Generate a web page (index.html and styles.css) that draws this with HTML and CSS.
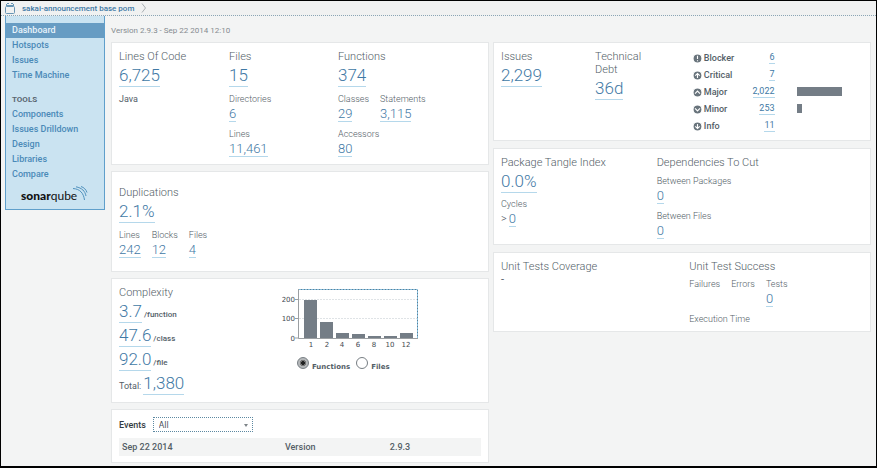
FILE: index.html
```html
<!DOCTYPE html>
<html lang="en">
<head>
<meta charset="utf-8">
<title>sakai-announcement base pom</title>
<link rel="stylesheet" href="styles.css">
</head>
<body>
<header class="crumbs">
  <svg class="crumb-icon" width="10" height="11" viewBox="0 0 10 11" fill="none" stroke="#6795b4"><rect x=".5" y="3.5" width="9" height="7" rx="1"/><path d="M1 2.500h8M2 .5h2M6 .5h2M1.500 1v2M8.500 1v2"/></svg>
  <a href="#">sakai-announcement base pom</a>
  <svg width="6" height="10" viewBox="0 0 6 10" fill="none" stroke="#aaafb3"><path d="M1 .5 4.500 5 1 9.500"/></svg>
</header>
<div class="layout">
  <nav class="sidebar">
    <a class="active" href="#">Dashboard</a>
    <a href="#">Hotspots</a>
    <a href="#">Issues</a>
    <a href="#">Time Machine</a>
    <h2>TOOLS</h2>
    <a href="#">Components</a>
    <a href="#">Issues Drilldown</a>
    <a href="#">Design</a>
    <a href="#">Libraries</a>
    <a href="#">Compare</a>
    <div class="logo"><b>sonar</b>qube<svg width="15" height="15" viewBox="0 0 15 15" fill="none" stroke="#4f91bd"><path d="M0 2.500C7 3 10.500 7 11.500 14M3 .8C9 2 12 5 13 10M8 .5c3 1 5 3 6 6"/></svg></div>
  </nav>
  <main>
    <p class="version">Version 2.9.3 - Sep 22 2014 12:10</p>
    <div class="columns">
      <div class="column left">
        <section class="card size">
          <div>
            <h3>Lines Of Code</h3>
            <a class="big" href="#">6,725</a>
            <p class="language">Java</p>
          </div>
          <div>
            <h3>Files</h3>
            <a class="big" href="#">15</a>
            <div class="metric"><span>Directories</span><a href="#">6</a></div>
            <div class="metric"><span>Lines</span><a href="#">11,461</a></div>
          </div>
          <div>
            <h3>Functions</h3>
            <a class="big" href="#">374</a>
            <div class="metrics">
              <div class="metric"><span>Classes</span><a href="#">29</a></div>
              <div class="metric"><span>Statements</span><a href="#">3,115</a></div>
            </div>
            <div class="metric"><span>Accessors</span><a href="#">80</a></div>
          </div>
        </section>
        <section class="card duplications">
          <h3>Duplications</h3>
          <a class="big" href="#">2.1%</a>
          <div class="metrics">
            <div class="metric"><span>Lines</span><a href="#">242</a></div>
            <div class="metric"><span>Blocks</span><a href="#">12</a></div>
            <div class="metric"><span>Files</span><a href="#">4</a></div>
          </div>
        </section>
        <section class="card complexity">
          <div>
            <h3>Complexity</h3>
            <p class="ratio"><a class="big" href="#">3.7</a> /function</p>
            <p class="ratio"><a class="big" href="#">47.6</a> /class</p>
            <p class="ratio"><a class="big" href="#">92.0</a> /file</p>
            <p class="ratio total">Total: <a class="big" href="#">1,380</a></p>
          </div>
          <div class="distribution">
            <svg class="chart" width="140" height="62" viewBox="0 0 140 62">
              <path d="M17 10.500H135M17 29.500H135" stroke="#dfe3e6" stroke-dasharray="2 1"/>
              <path d="M16 .5H135.500V49" fill="none" stroke="#83bbdb"/>
              <path d="M16 .5H135.500V49" fill="none" stroke="#5d7f93" stroke-dasharray="1 2"/>
              <path d="M16.500 0V49.500H136M13 10.500h4M13 29.500h4M13 49h4" fill="none" stroke="#9b9fa2"/>
              <path d="M22 11h13v38H22zM38 33h13v16H38zM54 44h13v5H54zM70 45h13v4H70zM86 47h13v2H86zM102 47h13v2H102zM118 44h13v5H118z" fill="#747d86"/>
              <g text-anchor="end"><text x="13" y="13">200</text><text x="13" y="32">100</text><text x="13" y="52">0</text></g>
              <g text-anchor="middle"><text x="29" y="58">1</text><text x="45" y="58">2</text><text x="60" y="58">4</text><text x="76" y="58">6</text><text x="92" y="58">8</text><text x="108" y="58">10</text><text x="124" y="58">12</text></g>
            </svg>
            <div class="choices">
              <label><input type="radio" name="scope" checked><span>Functions</span></label>
              <label><input type="radio" name="scope"><span>Files</span></label>
            </div>
          </div>
        </section>
        <section class="card events">
          <div class="filter">
            <label for="category">Events</label>
            <div class="picker"><select id="category"><option>All</option></select></div>
          </div>
          <table>
            <tr><td>Sep 22 2014</td><td>Version</td><td>2.9.3</td></tr>
          </table>
        </section>
      </div>
      <div class="column right">
        <section class="card issues">
          <div>
            <h3>Issues</h3>
            <a class="big" href="#">2,299</a>
          </div>
          <div>
            <h3>Technical<br>Debt</h3>
            <a class="big" href="#">36d</a>
          </div>
          <table class="severities">
            <tr><th><svg viewBox="0 0 8 8"><circle cx="4" cy="4" r="4"/><path d="M4 1.500v3M4 5.500v1"/></svg>Blocker</th><td><a href="#">6</a></td><td></td></tr>
            <tr><th><svg viewBox="0 0 8 8"><circle cx="4" cy="4" r="4"/><path d="M4 6.200V2.500M2 4.200l2-2 2 2"/></svg>Critical</th><td><a href="#">7</a></td><td></td></tr>
            <tr><th><svg viewBox="0 0 8 8"><circle cx="4" cy="4" r="4"/><path d="M1.800 5 4 2.800 6.200 5"/></svg>Major</th><td><a href="#">2,022</a></td><td><div class="bar" style="width:68%"></div></td></tr>
            <tr><th><svg viewBox="0 0 8 8"><circle cx="4" cy="4" r="4"/><path d="M1.800 3 4 5.200 6.200 3"/></svg>Minor</th><td><a href="#">253</a></td><td><div class="bar" style="width:8%"></div></td></tr>
            <tr><th><svg viewBox="0 0 8 8"><circle cx="4" cy="4" r="4"/><path d="M4 1.800v3.700M2 3.800l2 2 2-2"/></svg>Info</th><td><a href="#">11</a></td><td></td></tr>
          </table>
        </section>
        <section class="card packages">
          <div>
            <h3>Package Tangle Index</h3>
            <a class="big" href="#">0.0%</a>
            <div class="metric"><span>Cycles</span><div class="prefixed">&gt; <a href="#">0</a></div></div>
          </div>
          <div>
            <h3>Dependencies To Cut</h3>
            <div class="metric"><span>Between Packages</span><a href="#">0</a></div>
            <div class="metric"><span>Between Files</span><a href="#">0</a></div>
          </div>
        </section>
        <section class="card tests">
          <div>
            <h3>Unit Tests Coverage</h3>
            <p class="none">-</p>
          </div>
          <div>
            <h3>Unit Test Success</h3>
            <div class="metrics">
              <div class="metric"><span>Failures</span></div>
              <div class="metric"><span>Errors</span></div>
              <div class="metric"><span>Tests</span><a href="#">0</a></div>
            </div>
            <div class="metric"><span>Execution Time</span></div>
          </div>
        </section>
      </div>
    </div>
  </main>
</div>
</body>
</html>
```
FILE: styles.css
```css
* { box-sizing: border-box; }
body {
  margin: 0;
  min-height: 100vh;
  border: 1px solid #000;
  border-bottom-width: 2px;
  background: #f3f4f4;
  color: #535e67;
  font-family: Roboto, "Liberation Sans", sans-serif;
  font-size: 9px;
}
h2, h3, p { margin: 0; }
a { color: #3f79a5; text-decoration: none; }

.crumbs {
  display: flex;
  align-items: center;
  gap: 7px;
  height: 15px;
  padding-left: 4px;
  border-bottom: 1px dotted #8aa5b5;
  background: #f0f1f1;
  font-size: 8px;
  font-weight: 500;
}

.layout { display: flex; align-items: flex-start; }
.sidebar {
  width: 100px;
  flex: none;
  margin-left: 4px;
  padding: 7px 0 4px;
  border: 1px solid #5f9fcb;
  border-top: 0;
  background: #cae3f1;
  font-weight: 500;
}
.sidebar a, .sidebar h2 {
  display: block;
  padding-left: 6px;
  line-height: 15px;
}
.sidebar a { color: #4a8ab8; }
.sidebar h2 { margin-top: 9px; font-size: 8px; color: #5a6771; }
.sidebar .active { background: #679cc3; color: #e8f4fb; }
.logo {
  display: flex;
  align-items: center;
  height: 19px;
  margin-top: 4px;
  padding-left: 15px;
  color: #111;
  font: 12px/19px Lato, sans-serif;
}
.logo b { font-weight: 900; }
.logo svg { align-self: flex-start; margin-left: -4px; }

main { flex: 1; min-width: 0; padding: 0 5px 0 6px; }
.version { padding: 8px 0 4px; color: #858b90; font-size: 8px; line-height: 14px; }
.columns { display: grid; grid-template-columns: 1fr 1fr; gap: 4px; }
.column { display: flex; flex-direction: column; }
.left { gap: 6px; }
.right { gap: 7px; }
.card {
  padding: 5px 7px 7px;
  border: 1px solid #e5e7e8;
  background: #fff;
}
.size, .issues, .packages, .tests { display: grid; }
.size { grid-template-columns: 110px 109px 1fr; }
.issues { grid-template-columns: 26% 27% 1fr; padding-bottom: 6px; }
.packages { grid-template-columns: 43% 1fr; padding-bottom: 5px; }
.tests { grid-template-columns: 52% 1fr; padding-bottom: 5px; }

h3 { padding: 2px 0 1px; font-size: 11px; font-weight: 300; line-height: 13px; }
.big, .metric a {
  display: block;
  width: fit-content;
  border-bottom: 1px solid #b5d8eb;
  font-weight: 300;
}
.big { font-size: 17px; line-height: 22px; }
.metric { margin-top: 5px; font-weight: 300; }
.metric span { display: block; line-height: 14px; }
.metric a { font-size: 13px; line-height: 15px; }
.packages .metric { margin-top: 4px; }
.packages .metric + .metric { margin-top: 5px; }
.metrics { display: flex; gap: 11px; }
.prefixed { display: flex; gap: 2px; font-size: 11px; line-height: 15px; }
.language { margin-top: 5px; line-height: 14px; }
.duplications { padding: 12px 7px 13px; }

.complexity { display: grid; grid-template-columns: 45% 1fr; padding: 5px 7px 6px; }
.ratio { display: flex; align-items: baseline; gap: 2px; height: 24px; font-size: 8px; font-weight: 500; }
.total { font-size: 9px; font-weight: 400; }
.distribution { padding-top: 5px; }
.chart { display: block; }
.chart text { fill: #3f4951; font: 7px "DejaVu Sans", sans-serif; }
.choices { display: flex; gap: 6px; padding: 3px 0 0 15px; }
.choices label { display: flex; align-items: center; gap: 3px; }
.choices span { padding-top: 9px; font: 7px/9px "DejaVu Sans", sans-serif; font-weight: 700; }
.choices input {
  appearance: none;
  width: 12px;
  height: 12px;
  margin: 0;
  border: 1px solid #777e83;
  border-radius: 50%;
  background: #fff;
}
.choices input:checked { background: radial-gradient(circle, #222 0 2px, #777 2px 3px, #b5b8ba 3px); }

.events { padding: 7px 7px 6px; }
.filter { display: flex; align-items: center; gap: 7px; color: #333b42; font-weight: 500; }
.picker { position: relative; width: 100px; }
.picker::after {
  content: "";
  position: absolute;
  right: 5px;
  top: 7px;
  border: 2px solid transparent;
  border-top: 3px solid #7d8488;
}
select {
  appearance: none;
  display: block;
  width: 100%;
  height: 15px;
  padding: 2px 5px 0;
  border: 1px dotted #5d89a2;
  border-radius: 0;
  background: #fff;
  color: #444c52;
  font: 8px/11px "DejaVu Sans", sans-serif;
}
table { width: 100%; border-collapse: collapse; }
td, th { padding: 0; text-align: left; font-weight: 400; }
.events table { margin-top: 6px; background: #f3f4f4; table-layout: fixed; }
.events td { height: 18px; padding-left: 3px; font-weight: 500; }
.events td:first-child { width: 45%; }
.events td:nth-child(2) { width: 29%; }

.severities { margin-top: 1px; table-layout: fixed; align-self: start; }
.severities tr { height: 17px; }
.severities th { width: 30%; font-weight: 500; white-space: nowrap; }
.severities td { width: 18%; text-align: right; }
.severities td:last-child { width: 52%; padding-left: 22px; }
.severities td a { display: inline-block; border-bottom: 1px solid #b5d8eb; font-size: 9px; line-height: 12px; }
.severities svg { width: 9px; height: 9px; margin-right: 2px; vertical-align: -2px; fill: #69747c; stroke: #fff; }
.severities path { fill: none; }
.bar { height: 9px; background: #747d86; }

.tests .metrics .metric { margin-top: 3px; }
.none { font-size: 11px; line-height: 12px; }
```
